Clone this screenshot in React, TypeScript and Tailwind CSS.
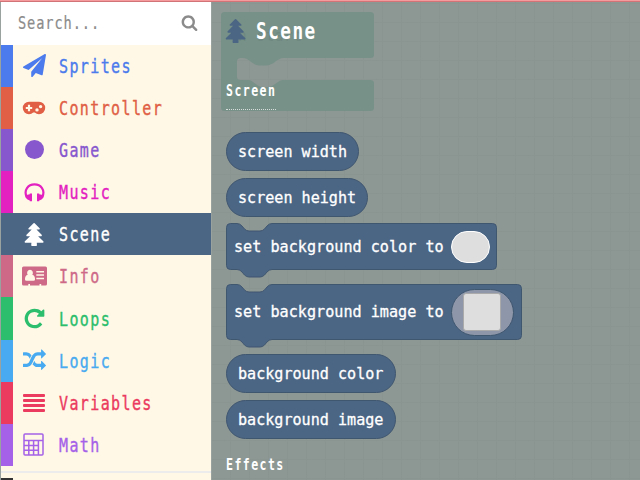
import React from "react";

const PLANE =
  "M1764 11q33 24 27 64l-256 1536q-5 29-32 45-14 8-31 8-11 0-24-5l-453-185-242 295q-18 23-49 23-13 0-22-4-19-7-30.500-23.500t-11.500-36.500v-349l864-1059-1069 925-395-162q-37-14-40-55-2-40 32-59l1664-960q15-9 32-9 20 0 36 11z";
const REPEAT =
  "M1664 256v448q0 26-19 45t-45 19h-448q-42 0-59-40-17-39 14-69l138-138q-148-137-349-137-104 0-198.500 40.500t-163.500 109.500-109.500 163.500-40.500 198.500 40.500 198.500 109.500 163.500 163.500 109.500 198.500 40.500q119 0 225-52t179-147q7-10 23-12 15 0 25 9l137 138q9 8 9.500 20.500t-7.500 22.500q-109 132-264 204.500t-327 72.500q-156 0-298-61t-245-164-164-245-61-298 61-298 164-245 245-164 298-61q147 0 284.500 55.500t244.500 156.500l130-129q29-31 70-14 39 17 39 59z";
const SHUFFLE =
  "M666 481q-60 92-137 273-22-45-37-72.500t-40.500-63.500-51-56.500-63-35-81.500-14.500h-224q-14 0-23-9t-9-23v-192q0-14 9-23t23-9h224q250 0 410 225zm1126 799q0 14-9 23l-320 320q-9 9-23 9-13 0-22.500-9.500t-9.500-22.500v-192q-32 0-85 .5t-81 1-73-1-71-5-64-10.500-63-18.500-58-28.500-59-40-55-53.500-56-69.500q59-93 136-273 22 45 37 72.500t40.500 63.500 51 56.500 63 35 81.500 14.500h256v-192q0-14 9-23t23-9q12 0 24 10l319 319q9 9 9 23zm0-896q0 14-9 23l-320 320q-9 9-23 9-13 0-22.500-9.500t-9.500-22.500v-192h-256q-48 0-87 15t-69 45-51 61.500-45 77.500q-32 62-78 171-29 66-49.500 111t-54 105-64 100-74 83-90 68.500-106.500 42-128 16.500h-224q-14 0-23-9t-9-23v-192q0-14 9-23t23-9h224q48 0 87-15t69-45 51-61.500 45-77.500q32-62 78-171 29-66 49.500-111t54-105 64-100 74-83 90-68.500 106.500-42 128-16.500h256v-192q0-14 9-23t23-9q12 0 24 10l319 319q9 9 9 23z";
const TREE =
  "M1600 1472q0 26-19 45t-45 19h-462q1 17 6 87.500t5 108.500q0 25-18 42.500t-43 17.500h-320q-25 0-43-17.500t-18-42.500q0-38 5-108.500t6-87.500h-462q-26 0-45-19t-19-45 19-45l402-403h-229q-26 0-45-19t-19-45 19-45l402-403h-197q-26 0-45-19t-19-45 19-45l384-384q19-19 45-19t45 19l384 384q19 19 19 45t-19 45-45 19h-197l402 403q19 19 19 45t-19 45-45 19h-229l402 403q19 19 19 45z";
const SEARCH =
  "M1216 832q0-185-131.500-316.500t-316.500-131.500-316.500 131.500-131.500 316.500 131.500 316.500 316.500 131.500 316.500-131.500 131.500-316.500zm512 832q0 52-38 90t-90 38q-54 0-90-38l-343-342q-179 124-399 124-143 0-273.500-55.500t-225-150-150-225-55.500-273.500 55.500-273.500 150-225 225-150 273.500-55.500 273.500 55.500 225 150 150 225 55.500 273.500q0 220-124 399l343 343q37 37 37 90z";

function Glyph({ d, className = "size-[23px]" }: { d: string; className?: string }) {
  return (
    <svg viewBox="0 0 1792 1792" className={className} fill="currentColor">
      <path d={d} />
    </svg>
  );
}

function Gamepad() {
  return (
    <svg viewBox="0 0 24 14" className="mt-[1px] h-[14px] w-6" fill="currentColor">
      <path
        fillRule="evenodd"
        d="M7 .8H17A6.200 6.200 0 0 1 17 13.200Q14.500 13.200 12.800 11.500H11.200Q9.500 13.200 7 13.200A6.200 6.200 0 0 1 7 .8ZM5.900 3.800V5.900H3.800V8.100H5.900V10.200H8.100V8.100H10.200V5.900H8.100V3.800ZM15 7.200A1.700 1.700 0 1 0 15 10.600A1.700 1.700 0 1 0 15 7.200ZM18.600 3.900A1.700 1.700 0 1 0 18.600 7.300A1.700 1.700 0 1 0 18.600 3.900Z"
      />
    </svg>
  );
}

function Headphones() {
  return (
    <svg viewBox="0 0 21 19" className="h-[19px] w-[21px]">
      <path d="M2.500 13.500C-.3 7 4 1.400 10.500 1.400S21.300 7 18.500 13.500" fill="none" stroke="currentColor" strokeWidth="2.200" />
      <path
        fill="currentColor"
        d="M1.500 13Q3 11.500 5.800 11.300V10.500H8V18.300H5.800V17.400Q3.300 17 1.500 14.500ZM19.500 13Q18 11.500 15.200 11.300V10.500H13V18.300H15.200V17.400Q17.700 17 19.500 14.500Z"
      />
    </svg>
  );
}

function AddressCard() {
  return (
    <svg viewBox="0 0 25 20" className="h-5 w-[25px]" fill="currentColor">
      <path
        fillRule="evenodd"
        d="M1.500.5H23.500A1.500 1.500 0 0 1 25 2V18A1.500 1.500 0 0 1 23.500 19.500H19.200V18H17.500V19.500H8V18H6.300V19.500H1.500A1.500 1.500 0 0 1 0 18V2A1.500 1.500 0 0 1 1.500.5ZM8 3.800A2.900 3.100 0 0 0 5.700 8.800Q3 9.500 3 13V13.500Q3 14.800 4.500 14.800H11.500Q13 14.800 13 13.500V13Q13 9.500 10.300 8.800A2.900 3.100 0 0 0 8 3.800ZM14.300 5V6.400H22V5ZM14.300 8.300V9.800H22V8.300ZM14.300 11.800V13.200H22V11.800Z"
      />
    </svg>
  );
}

function Calculator() {
  return (
    <svg viewBox="0 0 21 23" className="mr-[2px] h-[23px] w-[21px]" fill="none" stroke="currentColor" strokeWidth="1.500">
      <rect x="1" y="1" width="19" height="21" rx="1" />
      <path d="M1 7.500H20M1 12.400H15.500M1 17.300H15.500M5.800 7.500V22M10.600 7.500V22M15.400 7.500V22" />
    </svg>
  );
}

function Bars() {
  return (
    <span className="flex w-[22px] flex-col gap-[2px]">
      <i className="h-[3px] rounded-[1px] bg-current" />
      <i className="h-[3px] rounded-[1px] bg-current" />
      <i className="h-[3px] rounded-[1px] bg-current" />
      <i className="h-[3px] rounded-[1px] bg-current" />
    </span>
  );
}

const categories = [
  { name: "Sprites", color: "text-[#4b7bec]", icon: <Glyph d={PLANE} /> },
  { name: "Controller", color: "text-[#e05f45]", icon: <Gamepad /> },
  { name: "Game", color: "text-[#8757ce]", icon: <span className="size-[19px] rounded-full bg-current" /> },
  { name: "Music", color: "text-[#e321c0]", icon: <Headphones /> },
  { name: "Scene", color: "text-white", icon: <Glyph d={TREE} />, selected: true },
  { name: "Info", color: "text-[#ce6988]", icon: <AddressCard /> },
  { name: "Loops", color: "text-[#2cbe6c]", icon: <Glyph d={REPEAT} /> },
  { name: "Logic", color: "text-[#48aaf0]", icon: <Glyph d={SHUFFLE} /> },
  { name: "Variables", color: "text-[#eb3b5f]", icon: <Bars /> },
  { name: "Math", color: "text-[#a561e8]", icon: <Calculator /> },
];

function Sidebar() {
  return (
    <aside className="flex h-full w-[212px] shrink-0 flex-col border-r border-l border-[#9aa29f] bg-[#fff8e6]">
      <div className="flex h-[42.600px] shrink-0 items-center justify-between bg-white pr-[13px] pb-[1px] pl-[17px] text-[#8b8b8b]">
        <span className="origin-left scale-x-[0.78] text-[17.500px] tracking-[1.150px] [-webkit-text-stroke:0.2px_currentColor]">
          Search...
        </span>
        <Glyph d={SEARCH} className="size-[17px]" />
      </div>
      {categories.map((c) => (
        <div
          key={c.name}
          className={`flex h-[42.150px] shrink-0 items-center ${c.color} ${c.selected ? "bg-[#4b6584]" : ""}`}
        >
          <span className={`h-full w-3 shrink-0 ${c.selected ? "" : "bg-current"}`} />
          <span className="ml-[8px] flex w-[26px] items-center justify-center">{c.icon}</span>
          <span className="ml-[12px] origin-left scale-x-[0.75] text-[20px] leading-none tracking-[1.850px] [-webkit-text-stroke:0.4px_currentColor]">
            {c.name}
          </span>
        </div>
      ))}
      <div className="mt-[5px] h-[2px] shrink-0 bg-[#ececec]" />
      <div className="mt-[5px] h-3 w-3 shrink-0 bg-[#333]" />
    </aside>
  );
}

function Workspace() {
  return (
    <div className="absolute inset-0 bg-[#8d9794]">
      <svg width="428" height="480" className="absolute inset-0">
        <defs>
          <pattern id="grid" x="18" y="1" width="19" height="19" patternUnits="userSpaceOnUse">
            <path d="M0 .5H19M.5 0V19" stroke="#879390" strokeWidth="1" opacity="0.500" />
          </pattern>
        </defs>
        <rect width="428" height="480" fill="url(#grid)" />
        <path
          fill="#779188"
          d="M12.500 10H158.500Q162 10 162 13.500V52.500Q162 56 158.500 56H71C66 56 61 63.500 54 63.500H47C41 63.500 37 56 31 56H28.500Q25 56 25 59.500V74.500Q25 78 28.500 78H36C41 78 45 85 51 85H56C62 85 66 78 71 78H158.500Q162 78 162 81.500V105.500Q162 109 158.500 109H12.500Q9 109 9 105.500V13.500Q9 10 12.500 10Z"
        />
      </svg>
      <span className="absolute top-[22px] left-[26px] origin-left scale-x-[0.9] text-[16px] tracking-[0.600px] text-[#6f8880]">
        n start
      </span>
    </div>
  );
}

function Reporter({ width, children }: { width: string; children: React.ReactNode }) {
  return (
    <div
      className={`flex h-[39px] ${width} shrink-0 items-center rounded-full border border-[#405770] bg-[#4b6584] pt-[2px] pl-[11px] text-[15.100px] leading-none text-white [-webkit-text-stroke:0.3px_currentColor]`}
    >
      <span className="whitespace-nowrap">{children}</span>
    </div>
  );
}

function Statement({ w, h, label, children }: { w: number; h: number; label: string; children: React.ReactNode }) {
  const r = w - 0.5;
  const b = h - 0.5;
  const d = `M4.500 .5H11Q14 .5 16 3L18.500 6Q20.500 8 23 8H34Q36.500 8 38.500 6L41 3Q43 .5 46 .5H${r - 4}Q${r} .5 ${r} 4.500V${b - 4}Q${r} ${b} ${r - 4} ${b}H46Q43 ${b} 41 ${b + 2.5}L38.500 ${b + 5.5}Q36.500 ${b + 7.5} 34 ${b + 7.5}H23Q20.500 ${b + 7.5} 18.500 ${b + 5.5}L16 ${b + 2.5}Q14 ${b} 11 ${b}H4.500Q.5 ${b} .5 ${b - 4}V4.500Q.5 .5 4.500 .5Z`;
  return (
    <div
      className="relative flex shrink-0 items-center pl-2 text-[15.150px] leading-none text-white"
      style={{ width: w, height: h }}
    >
      <svg width={w} height={h + 9} className="absolute top-0 left-0">
        <path d={d} fill="#4b6584" stroke="#405770" />
      </svg>
      <span className="relative pt-[2px] whitespace-nowrap [-webkit-text-stroke:0.3px_currentColor]">{label}</span>
      {children}
    </div>
  );
}

function Flyout() {
  return (
    <div className="relative flex h-full flex-col items-start pl-[14px]">
      <header className="flex h-[57px] shrink-0 items-center">
        <Glyph d={TREE} className="-ml-[2px] size-[24px] text-[#4b6584]" />
        <h1 className="ml-[8px] origin-left scale-x-[0.77] pt-[1px] text-[23px] leading-none font-bold tracking-[1.900px] text-white">
          Scene
        </h1>
      </header>
      <h2 className="mt-[17px] h-[34px] w-[50px] shrink-0 border-b border-dotted border-[#d7dddb] pt-[8px] text-[15px] leading-none font-bold whitespace-nowrap text-white">
        <span className="block origin-left scale-x-[0.77] tracking-[1.850px]">Screen</span>
      </h2>
      <div className="mt-[22px] flex flex-col gap-[7px]">
        <Reporter width="w-[133px]">screen width</Reporter>
        <Reporter width="w-[142px]">screen height</Reporter>
      </div>
      <div className="mt-[6px] flex flex-col gap-[14px]">
        <Statement w={271} h={47} label="set background color to">
          <span className="relative ml-[7px] h-8 w-[39px] rounded-[16px] border border-white bg-[#dedede]" />
        </Statement>
        <Statement w={296} h={56} label="set background image to">
          <span className="relative ml-[7px] flex h-[47px] w-[63px] items-center justify-center rounded-full border border-[#405770] bg-[#8d97a9]">
            <span className="size-[38px] rounded-[3px] border border-[#aaa] bg-[#dedede]" />
          </span>
        </Statement>
      </div>
      <div className="mt-[14px] flex flex-col gap-[7px]">
        <Reporter width="w-[170px]">background color</Reporter>
        <Reporter width="w-[170px]">background image</Reporter>
      </div>
      <h2 className="mt-[19px] origin-left scale-x-[0.77] text-[15px] leading-none font-bold tracking-[1.850px] text-white">
        Effects
      </h2>
    </div>
  );
}

export default function App() {
  return (
    <div className="flex h-[480px] w-[640px] flex-col overflow-hidden font-['DejaVu_Sans_Mono',monospace]">
      <div className="h-[2px] w-full shrink-0 border-b border-[#d27378] bg-[#f59b9d]" />
      <div className="flex h-[478px]">
        <Sidebar />
        <main className="relative h-full flex-1 overflow-hidden">
          <Workspace />
          <Flyout />
        </main>
      </div>
    </div>
  );
}
